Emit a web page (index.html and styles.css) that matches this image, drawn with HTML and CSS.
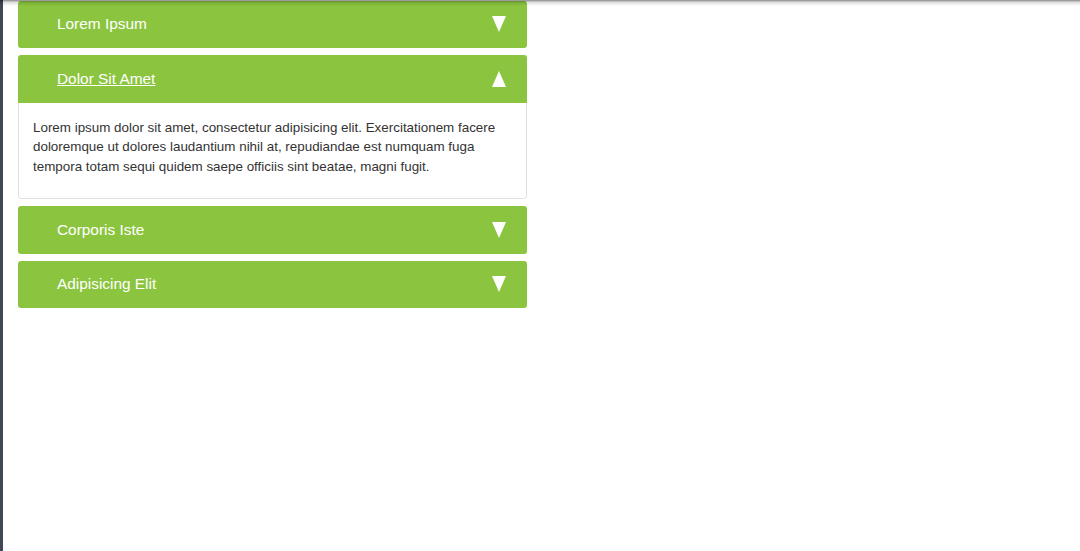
FILE: index.html
```html
<!DOCTYPE html>
<html>
<head>
<meta charset="utf-8">
<link rel="stylesheet" href="styles.css">
</head>
<body>
<div class="topshade"></div>
<div class="page">
  <div class="accordion">
    <div class="panel">
      <div class="head"><span class="title">Lorem Ipsum</span>
        <svg class="arrow" viewBox="0 0 14 16"><polygon points="0,0 14,0 7,16" fill="#fff"/></svg></div>
    </div>
    <div class="panel open">
      <div class="head"><a class="title link" href="#">Dolor Sit Amet</a>
        <svg class="arrow" viewBox="0 0 14 16"><polygon points="7,0 14,16 0,16" fill="#fff"/></svg></div>
      <div class="content">
        <p>Lorem ipsum dolor sit amet, consectetur adipisicing elit. Exercitationem facere doloremque ut dolores laudantium nihil at, repudiandae est numquam fuga tempora totam sequi quidem saepe officiis sint beatae, magni fugit.</p>
      </div>
    </div>
    <div class="panel">
      <div class="head"><span class="title">Corporis Iste</span>
        <svg class="arrow" viewBox="0 0 14 16"><polygon points="0,0 14,0 7,16" fill="#fff"/></svg></div>
    </div>
    <div class="panel">
      <div class="head"><span class="title">Adipisicing Elit</span>
        <svg class="arrow" viewBox="0 0 14 16"><polygon points="0,0 14,0 7,16" fill="#fff"/></svg></div>
    </div>
  </div>
</div>
</body>
</html>
```
FILE: styles.css
```css
html, body {
  margin: 0;
  padding: 0;
  background: #fff;
  height: 100%;
}
body {
  font-family: "Liberation Sans", Arial, sans-serif;
  border-left: 3px solid #414755;
  box-sizing: border-box;
  min-height: 551px;
}
.topshade {
  position: fixed;
  left: 0;
  top: 0;
  right: 0;
  height: 6px;
  background: linear-gradient(to bottom, rgba(0,0,0,0.45), rgba(0,0,0,0.12) 40%, rgba(0,0,0,0));
  pointer-events: none;
  z-index: 5;
}
.page {
  padding-left: 15px;
}
.accordion {
  width: 509px;
  display: flex;
  flex-direction: column;
  gap: 7px;
  margin-top: 0.5px;
}
.panel {
  border-radius: 3px;
  overflow: hidden;
}
.head {
  background: #8bc53f;
  height: 47.5px;
  display: flex;
  align-items: center;
  justify-content: space-between;
  padding: 0 21px 0 39px;
  box-sizing: border-box;
}
.title {
  color: #fff;
  font-size: 15.4px;
}
.link {
  text-decoration: underline;
}
.arrow {
  width: 14px;
  height: 16px;
  display: block;
}
.content {
  padding: 15px 15px 12px 14px;
  background: #fff;
  border: 1px solid #dde2e6;
  border-top: none;
  border-radius: 0 0 3px 3px;
}
.content p {
  margin: 0 0 10px 0;
  font-size: 13.4px;
  line-height: 19.5px;
  color: #333;
}
```
